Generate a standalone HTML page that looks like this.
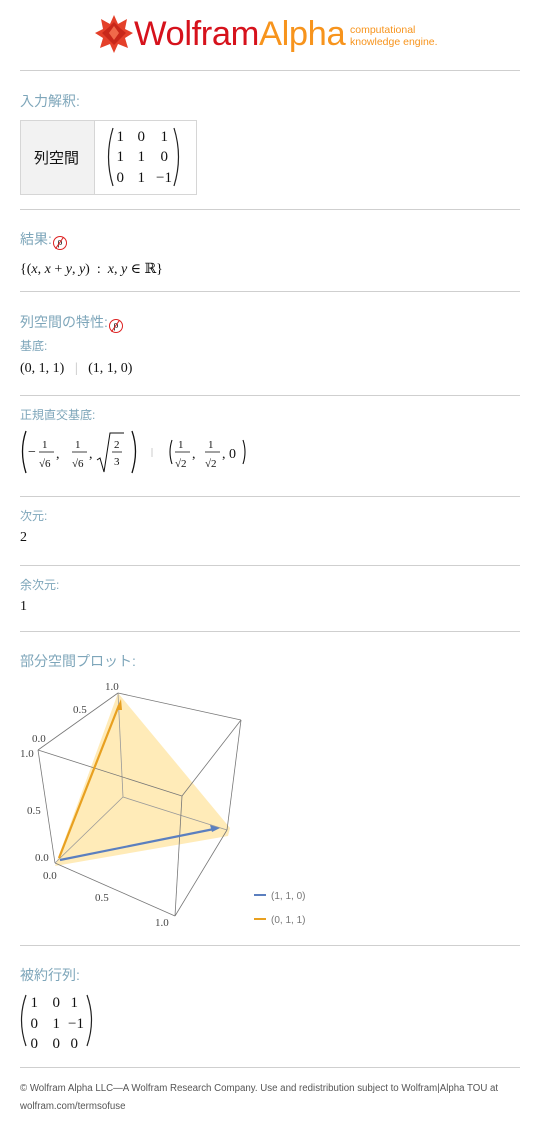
<!DOCTYPE html>
<html><head><meta charset="utf-8">
<style>
body{margin:0;background:#fff;width:540px;height:1126px;position:relative;overflow:hidden;font-family:"Liberation Sans","Noto Sans CJK JP",sans-serif}
.a{position:absolute}
.hr{position:absolute;left:20px;width:500px;height:1px;background:#cfcfcf}
.lbl{position:absolute;left:20px;color:#7ea6ba;font-size:14px;font-family:"Liberation Sans","Noto Sans CJK JP",sans-serif;white-space:nowrap}
.sub{font-size:12px}
.m{position:absolute;font-family:"Liberation Serif","DejaVu Serif",serif;font-size:14px;color:#111;white-space:nowrap}
.badge{display:inline-block;width:12px;height:12px;border:1.2px solid #d22;border-radius:50%;font-size:10px;line-height:11px;text-align:center;color:#222;vertical-align:-1px;font-family:"Liberation Serif","DejaVu Serif",serif;position:relative;margin-left:1px}
.badge:after{content:"";position:absolute;left:5px;top:-1px;width:1.2px;height:14px;background:#d22;transform:rotate(35deg)}
</style></head><body>

<!-- logo -->
<svg class="a" style="left:94px;top:14px" width="40" height="40" viewBox="0 0 40 40">
<polygon points="20,1 24,10 33,5 31,15 39,19 31,24 34,34 24,30 20,39 16,30 6,34 9,24 1,19 9,15 7,5 16,10" fill="#e4402a"/>
<polygon points="20,8 26,14 32,19 26,25 20,31 14,25 8,19 14,14" fill="#c8281a"/>
<polygon points="20,12 25,19 20,26 15,19" fill="#f06a4a"/>
</svg>
<div class="a" style="left:134px;top:12px;font-size:34.5px;letter-spacing:-0.4px;line-height:44px"><span style="color:#d6121c">Wolfram</span><span style="color:#f7941d">Alpha</span></div>
<div class="a" style="left:350px;top:24px;font-size:10.5px;line-height:12px;color:#f7941d">computational<br>knowledge engine.</div>

<div class="hr" style="top:70px"></div>

<div class="lbl" style="top:91px">入力解釈:</div>
<div class="a" style="left:20px;top:120px;width:175px;height:73px;border:1px solid #d6d6d6"></div>
<div class="a" style="left:21px;top:121px;width:73px;height:73px;background:#f2f2f2;border-right:1px solid #d6d6d6"></div>
<div class="a" style="left:34px;top:147px;font-size:15px;color:#111">列空間</div>
<svg class="a" style="left:100px;top:122px" width="90" height="70" viewBox="0 0 90 70" font-family="Liberation Serif,serif" font-size="15" fill="#111">
<path d="M13 6 Q4 35 13 64" stroke="#222" fill="none" stroke-width="1.2"/>
<path d="M74 6 Q83 35 74 64" stroke="#222" fill="none" stroke-width="1.2"/>
<g text-anchor="end">
<text x="24" y="19">1</text><text x="45" y="19">0</text><text x="68" y="19">1</text>
<text x="24" y="39">1</text><text x="45" y="39">1</text><text x="68" y="39">0</text>
<text x="24" y="60">0</text><text x="45" y="60">1</text><text x="72" y="60">−1</text>
</g>
</svg>

<div class="hr" style="top:209px"></div>
<div class="lbl" style="top:229px">結果:<span class="badge">ρ</span></div>
<div class="m" style="left:20px;top:261px">{(<i>x</i>, <i>x</i> + <i>y</i>, <i>y</i>) &nbsp;: &nbsp;<i>x</i>, <i>y</i> ∈ ℝ}</div>

<div class="hr" style="top:291px"></div>
<div class="lbl" style="top:312px">列空間の特性:<span class="badge">ρ</span></div>
<div class="lbl sub" style="top:337px">基底:</div>
<div class="m" style="left:20px;top:361px">(0, 1, 1) &nbsp;&nbsp;<span style="color:#bbb">|</span>&nbsp;&nbsp; (1, 1, 0)</div>

<div class="hr" style="top:395px"></div>
<div class="lbl sub" style="top:406px">正規直交基底:</div>
<svg class="a" style="left:18px;top:428px" width="240" height="50" viewBox="0 0 240 50" font-family="Liberation Serif,serif" fill="#111">
<path d="M8 3 Q1 23 8 45" stroke="#111" fill="none" stroke-width="1.3"/>
<text x="10" y="28" font-size="14">−</text>
<text x="24" y="20" font-size="11">1</text><line x1="21" y1="24" x2="36" y2="24" stroke="#111" stroke-width="0.8"/>
<text x="21" y="39" font-size="11">√6</text>
<text x="38" y="30" font-size="14">,</text>
<text x="57" y="20" font-size="11">1</text><line x1="54" y1="24" x2="69" y2="24" stroke="#111" stroke-width="0.8"/>
<text x="54" y="39" font-size="11">√6</text>
<text x="71" y="30" font-size="14">,</text>
<path d="M79 32 L82 30 L86 44 L92 5 L106 5" stroke="#111" fill="none" stroke-width="1"/>
<text x="96" y="20" font-size="11">2</text><line x1="94" y1="24" x2="104" y2="24" stroke="#111" stroke-width="0.8"/>
<text x="96" y="37" font-size="11">3</text>
<path d="M114 3 Q121 23 114 45" stroke="#111" fill="none" stroke-width="1.3"/>
<line x1="134" y1="20" x2="134" y2="29" stroke="#ccc"/>
<path d="M154 12 Q150 24 154 36" stroke="#111" fill="none" stroke-width="1.1"/>
<text x="160" y="20" font-size="11">1</text><line x1="157" y1="24" x2="172" y2="24" stroke="#111" stroke-width="0.8"/>
<text x="157" y="39" font-size="11">√2</text>
<text x="174" y="30" font-size="14">,</text>
<text x="190" y="20" font-size="11">1</text><line x1="187" y1="24" x2="202" y2="24" stroke="#111" stroke-width="0.8"/>
<text x="187" y="39" font-size="11">√2</text>
<text x="204" y="30" font-size="14">, 0</text>
<path d="M225 12 Q229 24 225 36" stroke="#111" fill="none" stroke-width="1.1"/>
</svg>

<div class="hr" style="top:496px"></div>
<div class="lbl sub" style="top:507px">次元:</div>
<div class="m" style="left:20px;top:530px">2</div>

<div class="hr" style="top:565px"></div>
<div class="lbl sub" style="top:576px">余次元:</div>
<div class="m" style="left:20px;top:599px">1</div>

<div class="hr" style="top:631px"></div>
<div class="lbl" style="top:651px">部分空間プロット:</div>

<svg class="a" style="left:0;top:670px" width="320" height="260" viewBox="0 670 320 260" font-family="Liberation Serif,serif" font-size="11" fill="#444">
<polygon points="55,866 118,693 230,828 228,836" fill="#ffe9b0" opacity="0.9"/>
<g stroke="#999" stroke-width="0.8" fill="none">
<line x1="118" y1="693" x2="123" y2="797"/><line x1="123" y1="797" x2="55" y2="863"/><line x1="123" y1="797" x2="227" y2="830"/>
</g>
<g stroke="#777" stroke-width="0.8" fill="none">
<line x1="118" y1="693" x2="241" y2="720"/><line x1="118" y1="693" x2="38" y2="750"/>
<line x1="38" y1="750" x2="182" y2="796"/><line x1="241" y1="720" x2="227" y2="830"/>
<line x1="182" y1="796" x2="241" y2="720"/><line x1="182" y1="796" x2="175" y2="916"/>
<line x1="38" y1="750" x2="55" y2="863"/><line x1="55" y1="863" x2="175" y2="916"/>
<line x1="175" y1="916" x2="227" y2="830"/>
</g>
<line x1="59" y1="858" x2="119" y2="705" stroke="#e8a020" stroke-width="2.2"/>
<polygon points="121,699 116,710 122,710" fill="#e8a020"/>
<line x1="60" y1="860" x2="214" y2="829" stroke="#5b7fbf" stroke-width="2.2"/>
<polygon points="220,828 210,825 212,832" fill="#5b7fbf"/>
<text x="105" y="690">1.0</text><text x="73" y="713">0.5</text><text x="32" y="742">0.0</text>
<text x="20" y="757">1.0</text><text x="27" y="814">0.5</text><text x="35" y="861">0.0</text>
<text x="43" y="879">0.0</text><text x="95" y="901">0.5</text><text x="155" y="926">1.0</text>
<line x1="254" y1="895" x2="266" y2="895" stroke="#5b7fbf" stroke-width="2"/>
<text x="271" y="899" font-family="Liberation Sans,sans-serif" font-size="10" fill="#777">(1, 1, 0)</text>
<line x1="254" y1="919" x2="266" y2="919" stroke="#e8a020" stroke-width="2"/>
<text x="271" y="923" font-family="Liberation Sans,sans-serif" font-size="10" fill="#777">(0, 1, 1)</text>
</svg>

<div class="hr" style="top:945px"></div>
<div class="lbl" style="top:965px">被約行列:</div>
<svg class="a" style="left:14px;top:990px" width="90" height="62" viewBox="0 0 90 62" font-family="Liberation Serif,serif" font-size="15" fill="#111">
<path d="M12 5 Q3 30 12 56" stroke="#222" fill="none" stroke-width="1.2"/>
<path d="M73 5 Q82 30 73 56" stroke="#222" fill="none" stroke-width="1.2"/>
<g text-anchor="end">
<text x="24" y="17">1</text><text x="46" y="17">0</text><text x="64" y="17">1</text>
<text x="24" y="38">0</text><text x="46" y="38">1</text><text x="70" y="38">−1</text>
<text x="24" y="58">0</text><text x="46" y="58">0</text><text x="64" y="58">0</text>
</g>
</svg>

<div class="hr" style="top:1067px"></div>
<div class="a" style="left:20px;top:1080px;font-size:9.7px;line-height:18px;color:#555;width:510px">© Wolfram Alpha LLC—A Wolfram Research Company. Use and redistribution subject to Wolfram|Alpha TOU at<br>wolfram.com/termsofuse</div>
</body></html>
